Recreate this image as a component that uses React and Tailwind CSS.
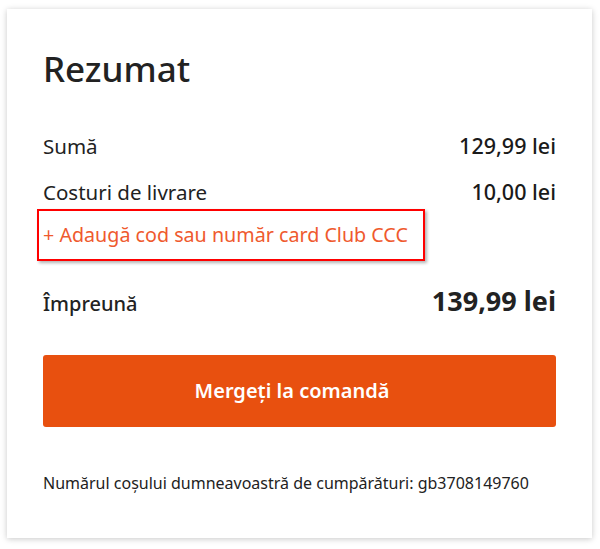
export default function App() {
  const font = { fontFamily: '"Noto Sans", Lato, sans-serif' }
  return (
    <div className="min-h-[549px] bg-white px-[7px] pt-[9px]" style={font}>
      <div className="w-[585px] h-[529px] bg-white shadow-[0_1px_6px_rgba(0,0,0,0.22)] px-[36px] pt-[39px] text-[#222]">
        <h2 className="text-[35px] leading-[42px] font-medium">Rezumat</h2>

        <div className="mt-[44px] flex items-baseline justify-between h-[46px] text-[20.5px] leading-[24px]">
          <span>Sumă</span>
          <span className="font-medium text-[21.5px] text-[#1a1a1a]">129,99 lei</span>
        </div>
        <div className="flex items-baseline justify-between h-[43px] text-[20.5px] leading-[24px]">
          <span>Costuri de livrare</span>
          <span className="font-medium text-[21.5px] text-[#1a1a1a]">10,00 lei</span>
        </div>

        <div className="relative h-[66px]">
          <a className="text-[19.7px] leading-[24px] text-[#ef5a2e]">
            + Adaugă cod sau număr card Club CCC
          </a>
          <div className="absolute left-[-6px] top-[-14px] w-[388px] h-[52px] border-2 border-[#ff0000] shadow-[2px_2px_3px_rgba(0,0,0,0.3)]"></div>
        </div>

        <div className="flex items-baseline justify-between h-[66px]">
          <span className="text-[20px] leading-[24px] font-medium">Împreună</span>
          <span className="text-[27px] leading-[24px] font-bold">139,99 lei</span>
        </div>

        <button className="w-full h-[72px] rounded-[3px] bg-[#e8500f] text-white text-[20px] font-semibold pr-[15px]">
          Mergeți la comandă
        </button>

        <p className="mt-[47px] text-[16px] leading-[19px] text-[#222]">
          Numărul coșului dumneavoastră de cumpărături: gb3708149760
        </p>
      </div>
    </div>
  )
}
